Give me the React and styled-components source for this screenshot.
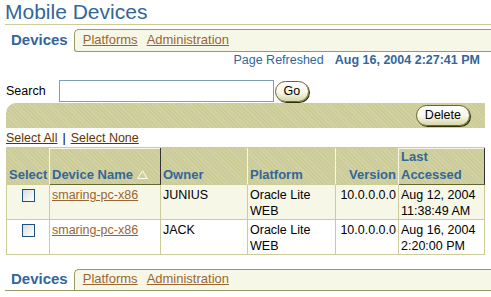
import React from 'react';
import styled, { createGlobalStyle, css } from 'styled-components';

const GlobalStyle = createGlobalStyle`
  html, body {
    margin: 0;
    padding: 0;
    background: #ffffff;
  }
  body {
    font-family: "Liberation Sans", Arial, sans-serif;
    font-size: 12.5px;
    color: #000000;
  }
`;

const hatch = css`
  background-color: #cccc99;
  background-image: repeating-linear-gradient(
    45deg,
    rgba(255, 255, 255, 0.13) 0 1px,
    transparent 1px 3px
  );
`;

const Page = styled.div`
  width: 491px;
`;

const Header = styled.div`
  margin-left: 5px;
`;

const Title = styled.h1`
  margin: 0;
  font-size: 21px;
  font-weight: normal;
  line-height: 24px;
  color: #336699;
  border-bottom: 1px solid #cccc99;
`;

const TabBar = styled.div`
  display: flex;
  margin-top: ${({ $bottom }) => ($bottom ? '14px' : '4px')};
  margin-left: ${({ $bottom }) => ($bottom ? '5px' : '0')};
  border-bottom: ${({ $bottom }) => ($bottom ? '1px solid #999966' : 'none')};
`;

const ActiveTab = styled.span`
  padding: ${({ $bottom }) => ($bottom ? '1px' : '2px')} 6px 0 6px;
  font-size: 15px;
  font-weight: bold;
  line-height: 17px;
  color: #336699;
`;

const TabGroup = styled.div`
  flex: 1;
  display: flex;
  gap: 9px;
  padding: ${({ $bottom }) => ($bottom ? '1px' : '2px')} 8px 4px 8px;
  background: #f7f7e7;
  border: 1px solid #999966;
  border-right: none;
  border-bottom: ${({ $bottom }) => ($bottom ? 'none' : '1px solid #999966')};
  border-radius: ${({ $bottom }) => ($bottom ? '5px 0 0 0' : '5px 0 0 3px')};
  line-height: 15px;
`;

const TabLink = styled.a`
  font-size: 13px;
  color: #996633;
  text-decoration: underline;
  cursor: pointer;
`;

const Content = styled.div`
  padding: 0 6px;
`;

const RefreshRow = styled.div`
  display: flex;
  justify-content: flex-end;
  gap: 11px;
  margin-top: 1px;
  padding-right: 5px;
  line-height: 15px;
  color: #336699;
`;

const RefreshDate = styled.span`
  font-weight: bold;
`;

const SearchRow = styled.div`
  display: flex;
  align-items: center;
  margin-top: 12px;
  height: 22px;
`;

const SearchLabel = styled.label`
  margin-right: 13px;
  line-height: 15px;
`;

const SearchInput = styled.input`
  box-sizing: border-box;
  width: 215px;
  height: 22px;
  margin: 0 1px 0 0;
  padding: 1px 3px;
  border: 1px solid #7f9db9;
  font-family: inherit;
  font-size: 12.5px;
  outline: none;
`;

const PillButton = styled.button`
  box-sizing: border-box;
  height: 21px;
  margin: 0;
  padding: 0 8px;
  font-family: inherit;
  font-size: 12.5px;
  line-height: 19px;
  color: #000000;
  border-radius: 11px;
  border: 1px solid #666633;
  background: linear-gradient(#ffffff, #f7f7e7 55%, #d6d6aa);
  box-shadow: 1px 1px 0 #333300;
  cursor: pointer;
`;

const ControlBar = styled.div`
  ${hatch}
  display: flex;
  align-items: center;
  justify-content: flex-end;
  height: 25px;
  margin-top: 1px;
  padding-right: 15px;
  border-top-left-radius: 10px;
`;

const SelectLinks = styled.div`
  display: flex;
  align-items: baseline;
  margin-top: 3px;
  line-height: 15px;
`;

const SelectLink = styled.a`
  color: #663300;
  text-decoration: underline;
  cursor: pointer;
`;

const Divider = styled.span`
  margin: 0 5px;
`;

const Grid = styled.table`
  width: 479px;
  margin-top: 1px;
  table-layout: fixed;
  border-collapse: separate;
  border-spacing: 0;
  border-left: 1px solid #cccc99;
  border-top: 1px solid #cccc99;
`;

const Col = styled.col`
  width: ${({ $w }) => $w}px;
`;

const HeadCell = styled.th`
  ${hatch}
  padding: 0 2px;
  font-size: 13px;
  font-weight: bold;
  line-height: 18px;
  color: #336699;
  text-align: ${({ $right }) => ($right ? 'right' : 'left')};
  vertical-align: bottom;
  border-right: 1px solid ${({ $sorted }) => ($sorted ? '#333333' : '#f7f7e7')};
  border-bottom: 1px solid ${({ $sorted }) => ($sorted ? '#666633' : '#cccc99')};
  box-shadow: ${({ $sorted }) => ($sorted ? 'inset 0 1px 0 #f7f7e7' : 'none')};
`;

const SortArrow = styled.svg`
  margin-left: 4px;
  vertical-align: baseline;
`;

const Cell = styled.td`
  padding: 2px 2px 0 2px;
  line-height: 16px;
  vertical-align: top;
  text-align: ${({ $right }) => ($right ? 'right' : 'left')};
  background: ${({ $odd }) => ($odd ? '#f7f7e7' : '#ffffff')};
  border-right: 1px solid #cccc99;
  border-bottom: 1px solid #cccc99;
  overflow: hidden;
`;

const CheckBox = styled.input`
  appearance: none;
  display: block;
  box-sizing: border-box;
  width: 13px;
  height: 13px;
  margin: 2px auto 0;
  border: 1px solid #1c5180;
  background: linear-gradient(135deg, #dcdcd7, #ffffff);
  cursor: pointer;
`;

const DeviceLink = styled.a`
  color: #996633;
  text-decoration: underline;
  cursor: pointer;
`;

const devices = [
  { name: 'smaring-pc-x86', owner: 'JUNIUS', platform: 'Oracle Lite WEB', version: '10.0.0.0.0', date: 'Aug 12, 2004', time: '11:38:49 AM' },
  { name: 'smaring-pc-x86', owner: 'JACK', platform: 'Oracle Lite WEB', version: '10.0.0.0.0', date: 'Aug 16, 2004', time: '2:20:00 PM' },
];

const Tabs = ({ bottom }) => (
  <TabBar $bottom={bottom}>
    <ActiveTab $bottom={bottom}>Devices</ActiveTab>
    <TabGroup $bottom={bottom}>
      <TabLink>Platforms</TabLink>
      <TabLink>Administration</TabLink>
    </TabGroup>
  </TabBar>
);

const App = () => {
  return (
    <Page>
      <GlobalStyle />
      <Header>
        <Title>Mobile Devices</Title>
        <Tabs />
      </Header>
      <Content>
        <RefreshRow>
          <span>Page Refreshed</span>
          <RefreshDate>Aug 16, 2004 2:27:41 PM</RefreshDate>
        </RefreshRow>
        <SearchRow>
          <SearchLabel htmlFor="search">Search</SearchLabel>
          <SearchInput id="search" type="text" />
          <PillButton>Go</PillButton>
        </SearchRow>
        <ControlBar>
          <PillButton>Delete</PillButton>
        </ControlBar>
        <SelectLinks>
          <SelectLink>Select All</SelectLink>
          <Divider>|</Divider>
          <SelectLink>Select None</SelectLink>
        </SelectLinks>
        <Grid>
          <colgroup>
            <Col $w={43} />
            <Col $w={111} />
            <Col $w={87} />
            <Col $w={88} />
            <Col $w={63} />
            <Col $w={86} />
          </colgroup>
          <thead>
            <tr>
              <HeadCell>Select</HeadCell>
              <HeadCell $sorted>
                Device Name
                <SortArrow width="11" height="9" viewBox="0 0 11 9">
                  <polygon points="5.5,0.8 10.3,8.5 0.7,8.5" fill="none" stroke="#fffff0" strokeWidth="1" />
                </SortArrow>
              </HeadCell>
              <HeadCell>Owner</HeadCell>
              <HeadCell>Platform</HeadCell>
              <HeadCell $right>Version</HeadCell>
              <HeadCell $sorted>Last Accessed</HeadCell>
            </tr>
          </thead>
          <tbody>
            {devices.map((d, i) => (
              <tr key={i}>
                <Cell $odd={i % 2 === 0}>
                  <CheckBox type="checkbox" />
                </Cell>
                <Cell $odd={i % 2 === 0}>
                  <DeviceLink>{d.name}</DeviceLink>
                </Cell>
                <Cell $odd={i % 2 === 0}>{d.owner}</Cell>
                <Cell $odd={i % 2 === 0}>{d.platform}</Cell>
                <Cell $odd={i % 2 === 0} $right>{d.version}</Cell>
                <Cell $odd={i % 2 === 0}>
                  {d.date} {d.time}
                </Cell>
              </tr>
            ))}
          </tbody>
        </Grid>
      </Content>
      <Tabs bottom />
    </Page>
  );
};

export default App;
